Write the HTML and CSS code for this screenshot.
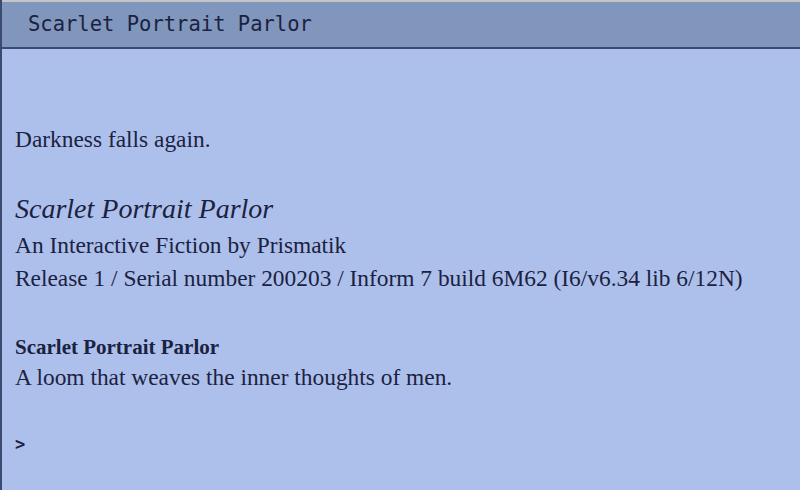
FILE: index.html
```html
<!DOCTYPE html>
<html>
<head>
<meta charset="utf-8">
<link rel="stylesheet" href="styles.css">
</head>
<body>
<div class="window">
  <div class="status">Scarlet Portrait Parlor</div>
  <div class="story">
    <p class="line gap-top">Darkness falls again.</p>
    <p class="line title">Scarlet Portrait Parlor</p>
    <p class="line">An Interactive Fiction by Prismatik</p>
    <p class="line">Release 1 / Serial number 200203 / Inform 7 build 6M62 (I6/v6.34 lib 6/12N)</p>
    <p class="line room">Scarlet Portrait Parlor</p>
    <p class="line">A loom that weaves the inner thoughts of men.</p>
    <p class="line prompt">&gt;</p>
  </div>
</div>
</body>
</html>
```
FILE: styles.css
```css
html, body {
  margin: 0;
  padding: 0;
  width: 800px;
  height: 490px;
  overflow: hidden;
  background: #adc0ec;
}
.window {
  height: 490px;
  border-left: 2px solid #3c4a70;
  box-sizing: border-box;
  color: #1b2240;
}
.status {
  height: 49px;
  box-sizing: border-box;
  border-top: 2px solid #c4c4c4;
  border-bottom: 2px solid #3c4a70;
  background: #8096bc;
  font-family: "DejaVu Sans Mono", monospace;
  font-size: 20.5px;
  line-height: 45px;
  padding-left: 26px;
  color: #1b2240;
}
.story {
  padding: 0 13px;
  font-family: "Liberation Serif", serif;
  font-size: 23.4px;
}
.line {
  margin: 0;
  line-height: 33px;
}
.gap-top { margin-top: 74px; }
.title {
  margin-top: 35px;
  margin-bottom: 2px;
  font-style: italic;
  font-size: 28px;
  line-height: 36px;
}
.room {
  margin-top: 38px;
  font-weight: bold;
  font-size: 21px;
  line-height: 28px;
}
.prompt {
  margin-top: 40px;
  font-family: "DejaVu Sans Mono", monospace;
  font-size: 17px;
  font-weight: bold;
  line-height: 20px;
}
```
